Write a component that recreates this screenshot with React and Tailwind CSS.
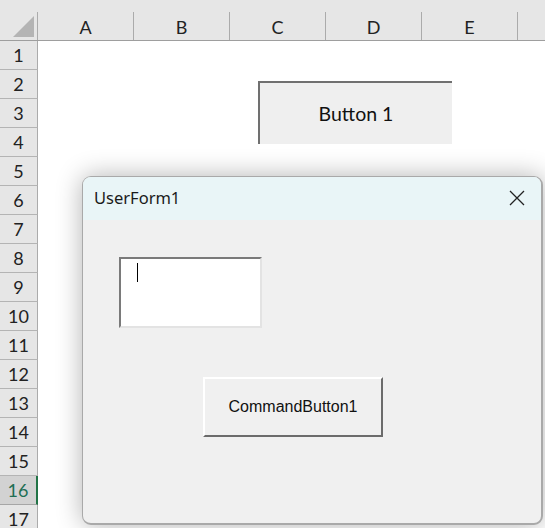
import React from "react";

const cols = ["A", "B", "C", "D", "E", ""];
const rows = Array.from({ length: 17 }, (_, i) => i + 1);

export default function App() {
  return (
    <div
      className="relative w-[545px] h-[528px] overflow-hidden bg-white"
      style={{ fontFamily: "Lato, 'Open Sans', sans-serif" }}
    >
      {/* Column header */}
      <div className="flex flex-col bg-[#e6e6e6] border-b border-[#9e9e9e]">
        <div className="h-[12px]" />
        <div className="flex h-[28px]">
          <div className="relative w-[38px] shrink-0 border-r border-[#ababab]">
            <svg className="absolute left-[13px] top-[4px]" width="22" height="21" viewBox="0 0 22 21">
              <polygon points="0,21 21,21 21,0" fill="#b4b4b4" />
            </svg>
          </div>
          {cols.map((c, i) => (
            <div
              key={i}
              className="w-[96px] shrink-0 border-r border-[#ababab] flex items-center justify-center text-[18px] text-[#222] leading-none pt-[2px]"
            >
              {c}
            </div>
          ))}
        </div>
      </div>

      {/* Body */}
      <div className="flex">
        <div className="w-[38px] shrink-0 flex flex-col">
          {rows.map((r) => (
            <div
              key={r}
              className={
                r === 16
                  ? "h-[29px] shrink-0 flex items-center justify-center bg-[#d2d2d2] border-b border-[#a6a6a6] border-r-2 border-r-[#217346] text-[18px] text-[#1f6f54] leading-none"
                  : "h-[29px] shrink-0 flex items-center justify-center bg-[#e6e6e6] border-b border-[#b4b4b4] border-r border-r-[#ababab] text-[18px] text-[#222] leading-none"
              }
            >
              {r}
            </div>
          ))}
        </div>
        <div className="flex-1 bg-white" />
      </div>

      {/* Form control button on the sheet */}
      <div className="absolute left-[258px] top-[81px] w-[194px] h-[63px] bg-[#efefef] border-t-2 border-l-2 border-[#707070] flex items-center justify-center text-[19.5px] text-[#111]">
        Button 1
      </div>

      {/* UserForm window */}
      <div className="absolute left-[82px] top-[176px] w-[461px] h-[349px] rounded-[9px] border border-[#a9a9a9] border-r-2 border-b-2 bg-[#f0f0f0] shadow-[0_0_26px_rgba(0,0,0,0.3)] overflow-hidden flex flex-col">
        <div
          className="h-[43px] shrink-0 bg-[#e9f5f7] flex items-center justify-between pl-[11px] pr-[16px]"
          style={{ fontFamily: "'Noto Sans', 'Open Sans', sans-serif" }}
        >
          <span className="text-[16.5px] text-[#1a1a1a] pb-[1px]">UserForm1</span>
          <svg width="16" height="16" viewBox="0 0 16 16" className="mt-[-2px]">
            <path d="M1 1 L15 15 M15 1 L1 15" stroke="#222" strokeWidth="1.3" />
          </svg>
        </div>
        <div className="flex-1 flex flex-col items-start">
          <div className="relative ml-[36px] mt-[37px] w-[143px] h-[71px] bg-white border-t-2 border-l-2 border-[#7a7a7a] border-b-2 border-r-2 border-b-[#e3e3e3] border-r-[#e3e3e3]">
            <div className="absolute left-[16px] top-[4px] w-px h-[19px] bg-black" />
          </div>
          <div
            className="ml-[120px] mt-[49px] w-[180px] h-[60px] bg-[#f0f0f0] border-2 border-t-white border-l-white border-b-[#6b6b6b] border-r-[#6b6b6b] flex items-center justify-center text-[16px] text-[#111]"
            style={{ fontFamily: "'Liberation Sans', Arial, sans-serif" }}
          >
            CommandButton1
          </div>
        </div>
      </div>
    </div>
  );
}
